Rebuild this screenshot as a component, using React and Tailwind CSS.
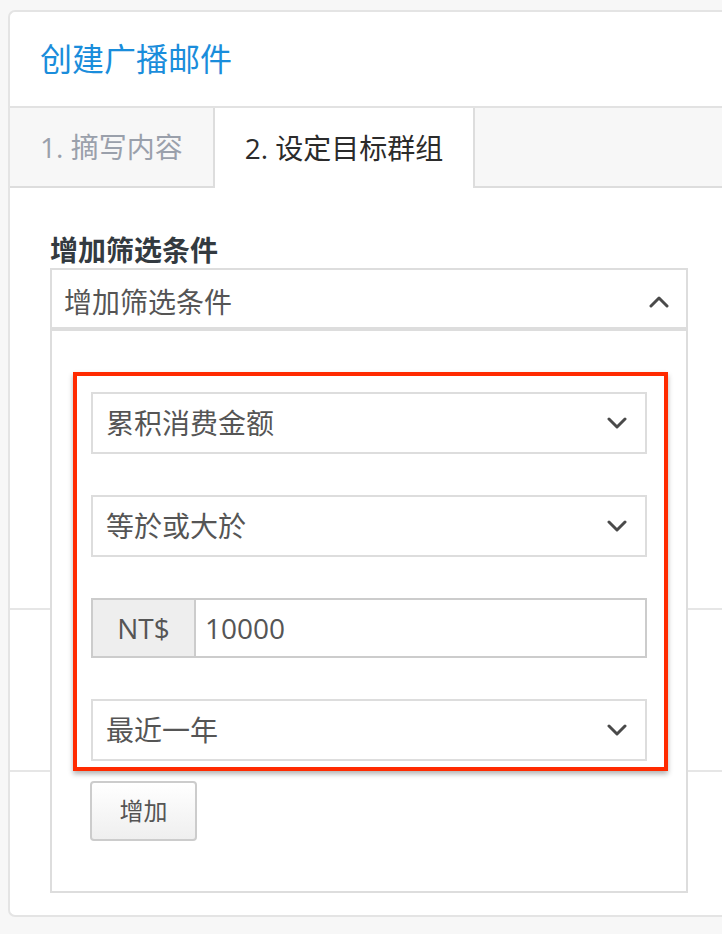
import React from "react";

const font = { fontFamily: '"Open Sans", "Noto Sans CJK SC", sans-serif' };

const Chevron = ({ up = false }) => (
    <svg width="20" height="12" viewBox="0 0 20 12" className="shrink-0">
        <polyline
            points={up ? "2,10 10,2 18,10" : "2,2 10,10 18,2"}
            fill="none"
            stroke="#4a4a4a"
            strokeWidth="3"
            strokeLinecap="round"
            strokeLinejoin="round"
        />
    </svg>
);

const Select = ({ value }) => (
    <div className="h-[62px] border-2 border-[#dddddd] bg-white flex items-center justify-between pl-[13px] pr-[18px]">
        <span className="text-[28px] text-[#555555] leading-none">{value}</span>
        <Chevron />
    </div>
);

const App = () => {
    return (
        <div className="w-[722px] h-[934px] overflow-hidden bg-[#f7f7f7] pt-[10px] pl-[8px]" style={font}>
            <div className="w-[760px] h-[907px] bg-white border-2 border-r-0 border-[#e4e4e4] rounded-l-[7px] flex flex-col">
                {/* header */}
                <div className="h-[96px] shrink-0 flex items-center px-[30px] border-b-2 border-[#e2e2e2]">
                    <h1 className="text-[32px] text-[#1a8ddb] leading-none font-normal">创建广播邮件</h1>
                </div>

                {/* tabs */}
                <div className="flex h-[80px] shrink-0 bg-[#f7f7f7]">
                    <div className="h-full flex items-center px-[30px] border-r-2 border-b-2 border-[#dddddd] text-[28px] text-[#9aa0ab]">
                        1. 摘写内容
                    </div>
                    <div className="h-full flex items-center px-[30px] bg-white border-r-2 border-[#dddddd] text-[28px] text-[#2b2b2b]">
                        2. 设定目标群组
                    </div>
                    <div className="flex-1 border-b-2 border-[#dddddd]" />
                </div>

                {/* body */}
                <div className="h-[422px] shrink-0 border-b-2 border-[#e6e6e6] px-[40px] pt-[45px]">
                    <label className="block text-[28px] leading-[34px] font-bold text-[#333a40] mb-[1px]">增加筛选条件</label>
                    <div className="relative w-[638px] z-10">
                        <div className="h-[63px] border-2 border-b-4 border-[#dddddd] bg-white flex items-center justify-between pl-[12px] pr-[17px] pt-[6px]">
                            <span className="text-[28px] text-[#555555] leading-none">增加筛选条件</span>
                            <Chevron up />
                        </div>
                        <div className="absolute top-full left-0 w-full h-[562px] bg-white border-2 border-t-0 border-[#dddddd] pt-[41px] pl-[21px]">
                            <div className="w-[595px] border-[4px] border-[#ff2a00] shadow-[0_3px_5px_rgba(0,0,0,0.3)] pl-[14px] pr-[17px] pt-[16px] pb-[6px] flex flex-col gap-[41px]">
                                <Select value="累积消费金额" />
                                <Select value="等於或大於" />
                                <div className="h-[60px] flex border-2 border-[#cccccc]">
                                    <div className="w-[103px] bg-[#eeeeee] border-r-2 border-[#cccccc] flex items-center justify-center text-[28px] text-[#555555]">
                                        NT$
                                    </div>
                                    <input
                                        type="text"
                                        defaultValue="10000"
                                        className="flex-1 pl-[9px] text-[28px] text-[#555555] outline-none bg-white"
                                        style={font}
                                    />
                                </div>
                                <Select value="最近一年" />
                            </div>
                            <button
                                type="button"
                                className="mt-[10px] ml-[17px] w-[107px] h-[60px] rounded-[4px] border-2 border-[#cccccc] bg-gradient-to-b from-white to-[#efefef] text-[24px] text-[#555555]"
                                style={font}
                            >
                                增加
                            </button>
                        </div>
                    </div>
                </div>
                <div className="h-[162px] shrink-0 border-b-2 border-[#e6e6e6]" />
                <div className="flex-1" />
            </div>
        </div>
    );
};

export default App;
